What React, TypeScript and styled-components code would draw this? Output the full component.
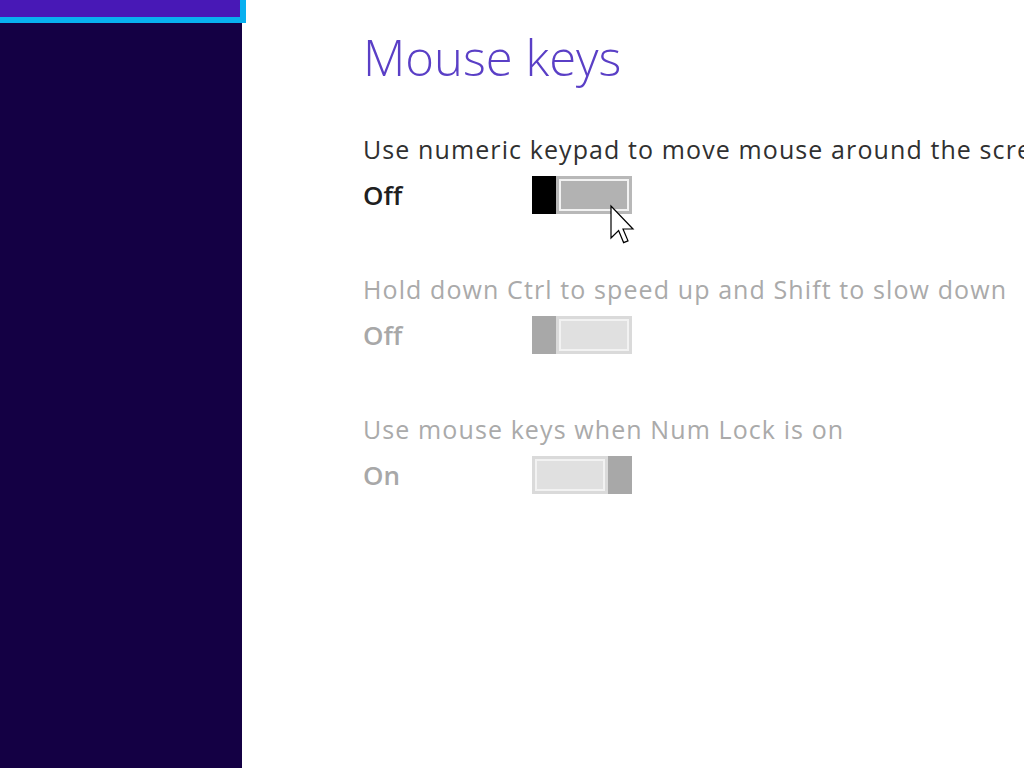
import React from "react";
import styled, { createGlobalStyle } from "styled-components";

const Global = createGlobalStyle`
  html, body { margin: 0; padding: 0; width: 1024px; height: 768px; overflow: hidden; background: #fff; }
  #root { width: 1024px; height: 768px; }
`;

const Page = styled.div`
  display: flex;
  width: 1024px;
  height: 768px;
  overflow: hidden;
  font-family: "Open Sans", "Noto Sans", sans-serif;
`;

const Sidebar = styled.div`
  flex: 0 0 242px;
  min-width: 0;
  background: #140044;
  position: relative;
  z-index: 1;
`;

const ActiveItem = styled.div`
  width: 246px;
  height: 23px;
  box-sizing: border-box;
  background: #4818b6;
  border-right: 6px solid #08b0f0;
  border-bottom: 6px solid #08b0f0;
`;

const Main = styled.div`
  flex: 1;
  padding: 27px 0 0 121px;
  min-width: 0;
  overflow: hidden;
`;

const Title = styled.h1`
  margin: 0;
  font-weight: 300;
  font-size: 49px;
  line-height: 60px;
  color: #5a3fc6;
  white-space: nowrap;
`;

const Rows = styled.div`
  display: flex;
  flex-direction: column;
  gap: 60px;
  margin-top: 47px;
`;

const Row = styled.div<{ $disabled?: boolean }>`
  display: flex;
  flex-direction: column;
  gap: 12px;
  color: ${(p) => (p.$disabled ? "#aaaaaa" : "#303030")};
`;

const Label = styled.div`
  font-size: 25px;
  line-height: 30px;
  white-space: nowrap;
  letter-spacing: 1.1px;
`;

const Control = styled.div`
  display: flex;
  align-items: center;
  height: 38px;
`;

const State = styled.div<{ $disabled?: boolean }>`
  width: 169px;
  font-size: 26px;
  line-height: 38px;
  font-weight: 600;
  color: ${(p) => (p.$disabled ? "#a8a8a8" : "#202020")};
`;

const Toggle = styled.div<{ $on?: boolean }>`
  position: relative;
  display: flex;
  flex-direction: ${(p) => (p.$on ? "row-reverse" : "row")};
  width: 100px;
  height: 38px;
`;

const Thumb = styled.div<{ $color: string }>`
  flex: 0 0 24px;
  background: ${(p) => p.$color};
`;

const Track = styled.div<{ $fill: string; $edge: string }>`
  flex: 1;
  box-sizing: border-box;
  border: 3px solid ${(p) => p.$edge};
  background: ${(p) => p.$fill};
  box-shadow: inset 0 0 0 2px #f2f2f2;
`;

const Cursor = styled.svg`
  position: absolute;
  left: 78px;
  top: 29px;
  width: 24px;
  height: 40px;
  overflow: visible;
`;

export default function App() {
  return (
    <Page>
      <Global />
      <Sidebar>
        <ActiveItem />
      </Sidebar>
      <Main>
        <Title>Mouse keys</Title>
        <Rows>
          <Row>
            <Label>Use numeric keypad to move mouse around the screen</Label>
            <Control>
              <State>Off</State>
              <Toggle>
                <Thumb $color="#000" />
                <Track $fill="#b2b2b2" $edge="#b8b8b8" />
                <Cursor viewBox="0 0 12 20">
                  <path
                    d="M0.5,0.5 L0.5,16.5 L4.3,12.8 L6.8,18.8 L9,17.9 L6.5,12 L11.5,12 Z"
                    fill="#fff"
                    stroke="#000"
                    strokeWidth="0.6"
                    strokeLinejoin="miter"
                  />
                </Cursor>
              </Toggle>
            </Control>
          </Row>
          <Row $disabled>
            <Label>Hold down Ctrl to speed up and Shift to slow down</Label>
            <Control>
              <State $disabled>Off</State>
              <Toggle>
                <Thumb $color="#a8a8a8" />
                <Track $fill="#e0e0e0" $edge="#dadada" />
              </Toggle>
            </Control>
          </Row>
          <Row $disabled>
            <Label>Use mouse keys when Num Lock is on</Label>
            <Control>
              <State $disabled>On</State>
              <Toggle $on>
                <Thumb $color="#a8a8a8" />
                <Track $fill="#e0e0e0" $edge="#dadada" />
              </Toggle>
            </Control>
          </Row>
        </Rows>
      </Main>
    </Page>
  );
}
